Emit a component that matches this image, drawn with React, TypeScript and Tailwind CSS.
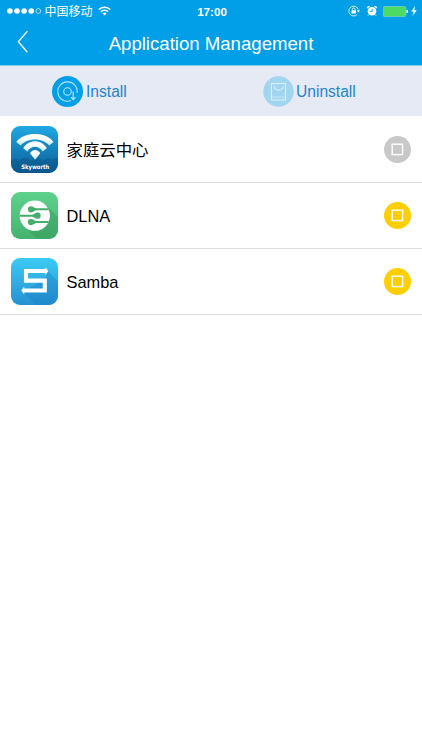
import { clsx } from "clsx";
import type { ReactNode } from "react";

type AppItem = {
  name: string;
  icon: ReactNode;
  active: boolean;
};

function StatusBar() {
  return (
    <div className="flex h-[22px] items-center justify-between pl-[7px] pr-[5px] text-white">
      <div className="flex w-[120px] items-center">
        <svg width="35" height="8" viewBox="0 0 35 8" fill="white">
          <circle cx="2.9" cy="4" r="2.8" />
          <circle cx="10" cy="4" r="2.8" />
          <circle cx="17.1" cy="4" r="2.8" />
          <circle cx="24.2" cy="4" r="2.8" />
          <circle cx="31.3" cy="4" r="2.4" fill="none" stroke="white" strokeWidth="0.6" />
        </svg>
        <span className="ml-[2.5px] whitespace-nowrap pt-px text-[12px] leading-none">中国移动</span>
        <svg className="ml-[5px]" width="13" height="10" viewBox="0 0 13 10" fill="none">
          <path d="M0.8 3.6a8.2 8.2 0 0 1 11.4 0" stroke="white" strokeWidth="1.6" />
          <path d="M2.9 5.8a5.1 5.1 0 0 1 7.2 0" stroke="white" strokeWidth="1.5" />
          <path d="M6.5 9.6L4.5 7.4a2.9 2.9 0 0 1 4 0z" fill="white" />
        </svg>
      </div>
      <span className="pt-px text-[11.6px] font-bold leading-none">17:00</span>
      <div className="flex w-[120px] items-center justify-end">
        <svg width="12" height="12" viewBox="0 0 12 12" fill="none">
          <path d="M10.3 4.4A4.9 4.9 0 1 0 9.2 9.5" stroke="white" strokeWidth="0.8" />
          <path d="M8.8 5.2h3.2L10.4 7.4z" fill="white" />
          <rect x="3.5" y="5.2" width="4.4" height="3.3" rx="0.3" fill="white" />
          <path d="M4.4 5.4V4.2a1.3 1.3 0 0 1 2.6 0v1.2" stroke="white" strokeWidth="0.8" />
        </svg>
        <svg className="ml-[6px]" width="12" height="12" viewBox="0 0 12 12" fill="none">
          <circle cx="6" cy="6.3" r="4.3" fill="white" />
          <path d="M1.3 3.2a2.6 2.6 0 0 1 2.3-1.7M8.4 1.5a2.6 2.6 0 0 1 2.3 1.7" stroke="white" strokeWidth="1.3" />
          <path d="M2.8 9.6l-.8 1M9.2 9.6l.8 1" stroke="white" strokeWidth="1" />
          <path d="M6.2 3.7v2.8H4" stroke="#009fe8" strokeWidth="0.9" />
        </svg>
        <svg className="ml-[5px]" width="25" height="11" viewBox="0 0 25 11">
          <rect x="0.3" y="0.4" width="22.4" height="10.2" rx="1.2" fill="#4cd964" stroke="#8fdcc8" strokeWidth="0.6" />
          <path d="M23.4 3.8a1.6 1.6 0 0 1 0 3.4z" fill="white" />
        </svg>
        <svg className="ml-[3px]" width="6" height="10" viewBox="0 0 6 10" fill="white">
          <path d="M4 0L0.2 5.5h2.3L1.6 10 5.8 4.2H3.4z" />
        </svg>
      </div>
    </div>
  );
}

function Header() {
  return (
    <div className="relative flex h-[43px] items-center justify-center text-white">
      <button className="absolute left-[17px] top-[8px]" aria-label="Back">
        <svg width="12" height="23" viewBox="0 0 12 23" fill="none">
          <path d="M10.4 1.1L1.3 11.8l9.1 10.4" stroke="white" strokeWidth="1.3" />
        </svg>
      </button>
      <h1 className="pt-[2px] text-[18.6px] leading-none">Application Management</h1>
    </div>
  );
}

function InstallIcon() {
  return (
    <svg width="31" height="31" viewBox="0 0 31 31" fill="none" stroke="#b8e6fb">
      <circle cx="15.5" cy="15.5" r="15.5" fill="#009fe8" stroke="none" />
      <path d="M19 24.6A9.7 9.7 0 1 1 25.1 17" strokeWidth="1.1" />
      <circle cx="15.5" cy="15.5" r="3.8" strokeWidth="1.1" />
      <path d="M21.2 15.6v7.8M18.9 21.1l2.3 2.5 2.3-2.5" strokeWidth="1.2" />
    </svg>
  );
}

function UninstallIcon() {
  return (
    <svg width="31" height="31" viewBox="0 0 31 31" fill="none" stroke="#d9effa">
      <circle cx="15.5" cy="15.5" r="15.2" fill="#a2d5f0" stroke="none" />
      <rect x="8.5" y="7.5" width="14" height="16.5" strokeWidth="1.1" />
      <path d="M8.8 21h13.8" strokeWidth="0.7" />
      <path d="M11.3 10.2c.6 5.2 8.2 5.2 8.8 0" strokeWidth="1.1" />
    </svg>
  );
}

function SkyworthIcon() {
  return (
    <svg width="47" height="47" viewBox="0 0 47 47">
      <defs>
        <linearGradient id="sky" x1="0" y1="0" x2="0" y2="1">
          <stop offset="0" stopColor="#1fa9e5" />
          <stop offset="0.55" stopColor="#137eb8" />
          <stop offset="1" stopColor="#0a5c94" />
        </linearGradient>
        <linearGradient id="wave" x1="0" y1="0" x2="0" y2="1">
          <stop offset="0.4" stopColor="#ffffff" />
          <stop offset="1" stopColor="#c4e6f7" />
        </linearGradient>
      </defs>
      <rect width="47" height="47" rx="9" fill="url(#sky)" />
      <path d="M0 35c3-3 6-2 8 0 3-4 9-4 12 0 4-4 9-3 12 0 3-3 7-3 9-1 2-2 4-2 6-1v5a9 9 0 0 1-9 9H9a9 9 0 0 1-9-9z" fill="#0a5084" fillOpacity="0.4" />
      <g fill="url(#wave)">
        <path d="M5.3 16C13 5.4 35 5.4 42.5 16L38.2 19.4C31.5 11.4 16.5 11.4 9.6 19.4z" />
        <path d="M12.2 22.2C17.5 13 30.5 13 35.8 22.2L31.6 25.4C27.6 19.2 20.4 19.2 16.4 25.4z" />
        <path d="M19 27.2c2.8-4.4 7.6-4.4 10.2 0L24.1 33.8z" />
      </g>
      <text x="24.3" y="42.8" textAnchor="middle" fontFamily="'DejaVu Sans', sans-serif" fontWeight="bold" fontSize="6" textLength="28" lengthAdjust="spacingAndGlyphs" fill="white">
        Skyworth
      </text>
    </svg>
  );
}

function DlnaIcon() {
  return (
    <svg width="47" height="47" viewBox="0 0 47 47">
      <defs>
        <linearGradient id="dlna" x1="0" y1="0" x2="0" y2="1">
          <stop offset="0" stopColor="#5ed28c" />
          <stop offset="1" stopColor="#45b36f" />
        </linearGradient>
        <clipPath id="disc">
          <circle cx="23.8" cy="23.7" r="15.1" />
        </clipPath>
      </defs>
      <rect width="47" height="47" rx="9" fill="url(#dlna)" />
      <path d="M36 14L47 25v13a9 9 0 0 1-9 9H26L13.5 34.5z" fill="#359b5d" fillOpacity="0.5" />
      <circle cx="23.8" cy="23.7" r="15.1" fill="white" />
      <g clipPath="url(#disc)" fill="#43ad6c">
        <path d="M20 14.2c2.3 0 3.2 1.8 5.3 2.1H40v2H25.3c-2.1.3-3 2.1-5.3 2.1a3.1 3.1 0 0 1 0-6.2z" />
        <path d="M26.6 20.6c-2.3 0-3.2 1.8-5.3 2.1H8v2h13.3c2.1.3 3 2.1 5.3 2.1a3.1 3.1 0 0 0 0-6.2z" />
        <path d="M20 27c2.3 0 3.2 1.8 5.3 2.1H40v2H25.3c-2.1.3-3 2.1-5.3 2.1a3.1 3.1 0 0 1 0-6.2z" />
      </g>
    </svg>
  );
}

function SambaIcon() {
  return (
    <svg width="47" height="47" viewBox="0 0 47 47">
      <defs>
        <linearGradient id="samba" x1="0" y1="0" x2="0" y2="1">
          <stop offset="0" stopColor="#3ccbf4" />
          <stop offset="1" stopColor="#2590d2" />
        </linearGradient>
      </defs>
      <rect width="47" height="47" rx="9" fill="url(#samba)" />
      <path d="M37 13.2L47 23v15a9 9 0 0 1-9 9H24.5L12 34l22-13z" fill="#1878bd" fillOpacity="0.3" />
      <path d="M35 13H15v9.6h18.8v9.9H12.5" fill="none" stroke="white" strokeWidth="4.1" />
      <path d="M34.4 9.1l2.9 3.9-2.9 3.9zM13.2 28.6l-2.9 3.9 2.9 3.9z" fill="white" />
    </svg>
  );
}

const apps: AppItem[] = [
  { name: "家庭云中心", icon: <SkyworthIcon />, active: false },
  { name: "DLNA", icon: <DlnaIcon />, active: true },
  { name: "Samba", icon: <SambaIcon />, active: true },
];

function AppRow({ name, icon, active }: AppItem) {
  return (
    <li className="flex h-[66px] items-center border-b border-[#dedede] pl-[10.5px] pr-[11.5px]">
      {icon}
      <span className="ml-[9px] flex-1 pt-px text-[16.4px] leading-none text-black">{name}</span>
      <button
        className={clsx(
          "flex size-[27px] items-center justify-center rounded-full",
          active ? "bg-[#fdcf00]" : "bg-[#c8c8c8]",
        )}
        aria-label={name}
      >
        <svg width="13" height="13" viewBox="0 0 13 13" fill="none">
          <rect x="1.2" y="1.2" width="10.4" height="10.4" stroke="white" strokeWidth="1.4" />
        </svg>
      </button>
    </li>
  );
}

export default function App() {
  return (
    <main className="min-h-screen w-full bg-white font-['Liberation_Sans','Noto_Sans_CJK_SC',sans-serif]">
      <header className="border-b border-[#7fcdf2] bg-[#009fe8]">
        <StatusBar />
        <Header />
      </header>
      <nav className="grid h-[50px] grid-cols-2 bg-[#e6eaf4] text-[15.6px] leading-none text-[#2384d0]">
        <button className="flex items-center pl-[52px]">
          <InstallIcon />
          <span className="ml-[3px] pt-[2px]">Install</span>
        </button>
        <button className="flex items-center pl-[52px]">
          <UninstallIcon />
          <span className="ml-[2px] pt-[2px]">Uninstall</span>
        </button>
      </nav>
      <ul className="pt-px">
        {apps.map((app) => (
          <AppRow key={app.name} {...app} />
        ))}
      </ul>
    </main>
  );
}
